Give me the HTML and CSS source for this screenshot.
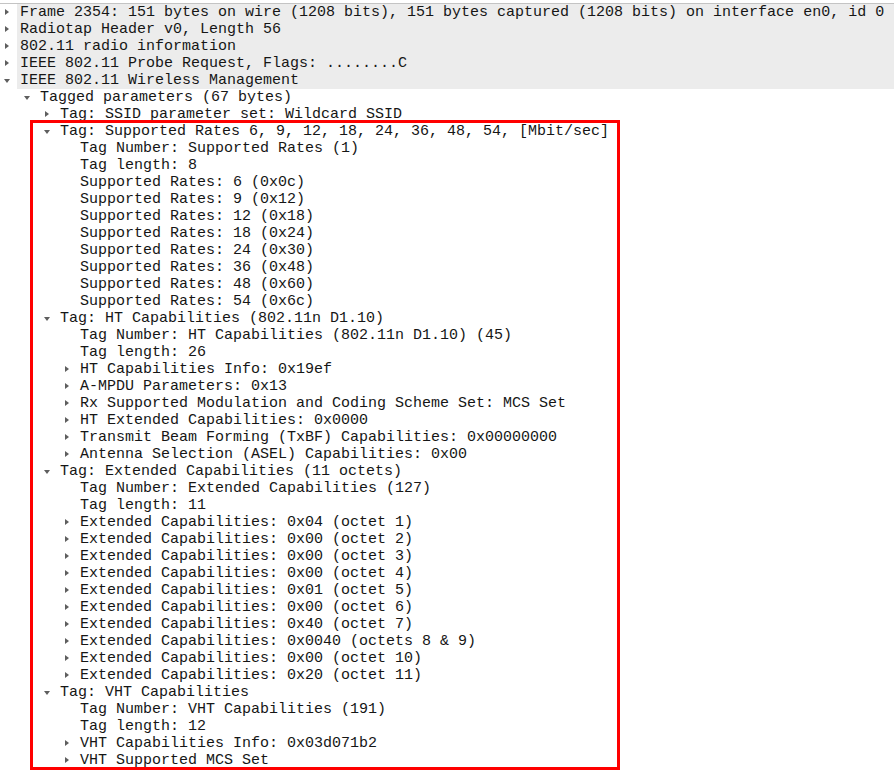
FILE: index.html
```html
<!DOCTYPE html>
<html lang="en">

<head>
    <meta charset="UTF-8">
    <meta name="viewport" content="width=device-width, initial-scale=1.0">
    <title>Packet details</title>
    <link rel="stylesheet" href="styles.css">
</head>

<body>
    <div class="tree">
        <div class="row lv0 closed hl"><span class="arrow"></span><span class="label">Frame 2354: 151 bytes on wire (1208 bits), 151 bytes captured (1208 bits) on interface en0, id 0</span></div>
        <div class="row lv0 closed hl"><span class="arrow"></span><span class="label">Radiotap Header v0, Length 56</span></div>
        <div class="row lv0 closed hl"><span class="arrow"></span><span class="label">802.11 radio information</span></div>
        <div class="row lv0 closed hl"><span class="arrow"></span><span class="label">IEEE 802.11 Probe Request, Flags: ........C</span></div>
        <div class="row lv0 open hl"><span class="arrow"></span><span class="label">IEEE 802.11 Wireless Management</span></div>
        <div class="row lv1 open"><span class="arrow"></span><span class="label">Tagged parameters (67 bytes)</span></div>
        <div class="row lv2 closed"><span class="arrow"></span><span class="label">Tag: SSID parameter set: Wildcard SSID</span></div>

        <div class="row lv2 open"><span class="arrow"></span><span class="label">Tag: Supported Rates 6, 9, 12, 18, 24, 36, 48, 54, [Mbit/sec]</span></div>
        <div class="row lv3"><span class="arrow"></span><span class="label">Tag Number: Supported Rates (1)</span></div>
        <div class="row lv3"><span class="arrow"></span><span class="label">Tag length: 8</span></div>
        <div class="row lv3"><span class="arrow"></span><span class="label">Supported Rates: 6 (0x0c)</span></div>
        <div class="row lv3"><span class="arrow"></span><span class="label">Supported Rates: 9 (0x12)</span></div>
        <div class="row lv3"><span class="arrow"></span><span class="label">Supported Rates: 12 (0x18)</span></div>
        <div class="row lv3"><span class="arrow"></span><span class="label">Supported Rates: 18 (0x24)</span></div>
        <div class="row lv3"><span class="arrow"></span><span class="label">Supported Rates: 24 (0x30)</span></div>
        <div class="row lv3"><span class="arrow"></span><span class="label">Supported Rates: 36 (0x48)</span></div>
        <div class="row lv3"><span class="arrow"></span><span class="label">Supported Rates: 48 (0x60)</span></div>
        <div class="row lv3"><span class="arrow"></span><span class="label">Supported Rates: 54 (0x6c)</span></div>

        <div class="row lv2 open"><span class="arrow"></span><span class="label">Tag: HT Capabilities (802.11n D1.10)</span></div>
        <div class="row lv3"><span class="arrow"></span><span class="label">Tag Number: HT Capabilities (802.11n D1.10) (45)</span></div>
        <div class="row lv3"><span class="arrow"></span><span class="label">Tag length: 26</span></div>
        <div class="row lv3 closed"><span class="arrow"></span><span class="label">HT Capabilities Info: 0x19ef</span></div>
        <div class="row lv3 closed"><span class="arrow"></span><span class="label">A-MPDU Parameters: 0x13</span></div>
        <div class="row lv3 closed"><span class="arrow"></span><span class="label">Rx Supported Modulation and Coding Scheme Set: MCS Set</span></div>
        <div class="row lv3 closed"><span class="arrow"></span><span class="label">HT Extended Capabilities: 0x0000</span></div>
        <div class="row lv3 closed"><span class="arrow"></span><span class="label">Transmit Beam Forming (TxBF) Capabilities: 0x00000000</span></div>
        <div class="row lv3 closed"><span class="arrow"></span><span class="label">Antenna Selection (ASEL) Capabilities: 0x00</span></div>

        <div class="row lv2 open"><span class="arrow"></span><span class="label">Tag: Extended Capabilities (11 octets)</span></div>
        <div class="row lv3"><span class="arrow"></span><span class="label">Tag Number: Extended Capabilities (127)</span></div>
        <div class="row lv3"><span class="arrow"></span><span class="label">Tag length: 11</span></div>
        <div class="row lv3 closed"><span class="arrow"></span><span class="label">Extended Capabilities: 0x04 (octet 1)</span></div>
        <div class="row lv3 closed"><span class="arrow"></span><span class="label">Extended Capabilities: 0x00 (octet 2)</span></div>
        <div class="row lv3 closed"><span class="arrow"></span><span class="label">Extended Capabilities: 0x00 (octet 3)</span></div>
        <div class="row lv3 closed"><span class="arrow"></span><span class="label">Extended Capabilities: 0x00 (octet 4)</span></div>
        <div class="row lv3 closed"><span class="arrow"></span><span class="label">Extended Capabilities: 0x01 (octet 5)</span></div>
        <div class="row lv3 closed"><span class="arrow"></span><span class="label">Extended Capabilities: 0x00 (octet 6)</span></div>
        <div class="row lv3 closed"><span class="arrow"></span><span class="label">Extended Capabilities: 0x40 (octet 7)</span></div>
        <div class="row lv3 closed"><span class="arrow"></span><span class="label">Extended Capabilities: 0x0040 (octets 8 &amp; 9)</span></div>
        <div class="row lv3 closed"><span class="arrow"></span><span class="label">Extended Capabilities: 0x00 (octet 10)</span></div>
        <div class="row lv3 closed"><span class="arrow"></span><span class="label">Extended Capabilities: 0x20 (octet 11)</span></div>

        <div class="row lv2 open"><span class="arrow"></span><span class="label">Tag: VHT Capabilities</span></div>
        <div class="row lv3"><span class="arrow"></span><span class="label">Tag Number: VHT Capabilities (191)</span></div>
        <div class="row lv3"><span class="arrow"></span><span class="label">Tag length: 12</span></div>
        <div class="row lv3 closed"><span class="arrow"></span><span class="label">VHT Capabilities Info: 0x03d071b2</span></div>
        <div class="row lv3 closed"><span class="arrow"></span><span class="label">VHT Supported MCS Set</span></div>
    </div>

    <!-- annotation drawn over the tree -->
    <div class="mark"></div>
</body>

</html>
```

FILE: styles.css
```css
html,
body {
    margin: 0;
    background: #fff;
}

body {
    position: relative;
    width: 894px;
    height: 770px;
    overflow: hidden;
}

.tree {
    border-top: 1px solid #c4c4c4;
    margin-top: 3px;
    font-family: "Liberation Mono", monospace;
    font-size: 15px;
    color: #161616;
}

.row {
    display: flex;
    height: 17px;
    line-height: 17px;
    white-space: nowrap;
}

.row.lv1 {
    padding-left: 20px;
}

.row.lv2 {
    padding-left: 40px;
}

.row.lv3 {
    padding-left: 60px;
}

.arrow {
    position: relative;
    flex: 0 0 17px;
}

.label {
    flex: 1;
    padding-left: 3px;
}

.hl .label {
    background: #ececec;
}

.closed .arrow::before,
.open .arrow::before {
    content: "";
    position: absolute;
    width: 0;
    height: 0;
}

.closed .arrow::before {
    left: 5px;
    top: 5px;
    border-left: 4px solid #5e5e5e;
    border-top: 3.5px solid transparent;
    border-bottom: 3.5px solid transparent;
}

.open .arrow::before {
    left: 4px;
    top: 7px;
    border-top: 4px solid #5e5e5e;
    border-left: 3.5px solid transparent;
    border-right: 3.5px solid transparent;
}

.mark {
    position: absolute;
    left: 30px;
    top: 120px;
    width: 590px;
    height: 650px;
    box-sizing: border-box;
    border: 3px solid #f00;
}
```
